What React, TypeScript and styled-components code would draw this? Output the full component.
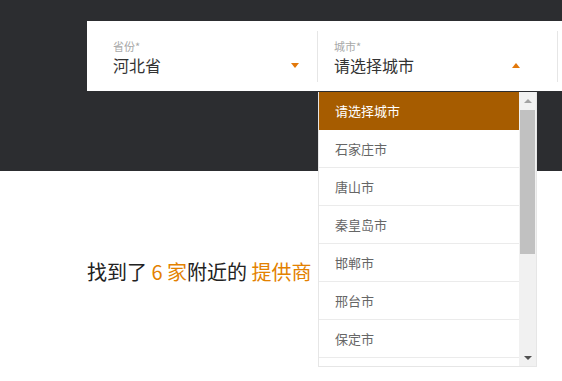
import React from "react";
import styled, { createGlobalStyle } from "styled-components";

const Global = createGlobalStyle`
  html { overflow: hidden; }
  body { margin: 0; padding: 0; background: #fff; min-height: 100vh; font-family: "Noto Sans CJK SC", "Noto Sans", sans-serif; }
  * { box-sizing: border-box; }
`;

const Header = styled.header`
  height: 171px;
  background: #2c2d30;
  padding: 21px 0 0 87px;
`;

const Card = styled.div`
  display: flex;
  height: 70px;
  width: 520px;
  background: #fff;
  padding: 10px 0 9px;
`;

const Field = styled.div<{ $w: number; $pl: number; $pr: number }>`
  position: relative;
  flex: 0 0 ${(p) => p.$w}px;
  padding: 7px ${(p) => p.$pr}px 0 ${(p) => p.$pl}px;
  border-right: 1px solid #e6e6e6;
`;

const Label = styled.div`
  font-size: 11px;
  line-height: 16px;
  color: #a8a8a8;
`;

const ValueRow = styled.div`
  display: flex;
  align-items: center;
  justify-content: space-between;
  font-size: 16px;
  line-height: 22px;
  color: #333;
`;

const Caret = styled.span<{ $up?: boolean }>`
  width: 0;
  height: 0;
  margin-top: 1px;
  border-left: 4px solid transparent;
  border-right: 4px solid transparent;
  ${(p) =>
    p.$up
      ? "border-bottom: 5px solid #e2780a;"
      : "border-top: 5px solid #e2780a;"}
`;

const Dropdown = styled.div`
  position: absolute;
  top: calc(100% + 10px);
  left: 0;
  width: 219px;
  height: 275px;
  display: flex;
  background: #fff;
  border: 1px solid #e6e6e6;
  border-top: none;
  z-index: 5;
`;

const List = styled.ul`
  flex: 1;
  margin: 0;
  padding: 0;
  list-style: none;
  overflow: hidden;
`;

const Item = styled.li<{ $active?: boolean }>`
  height: 38px;
  display: flex;
  align-items: center;
  padding-left: 16px;
  font-size: 13px;
  color: ${(p) => (p.$active ? "#fff" : "#666")};
  background: ${(p) => (p.$active ? "#a65c00" : "#fff")};
  border-bottom: 1px solid ${(p) => (p.$active ? "#a65c00" : "#ebebeb")};
`;

const ScrollBar = styled.div`
  flex: 0 0 17px;
  background: #f1f1f1;
  display: flex;
  flex-direction: column;
  align-items: center;
`;

const ScrollBtn = styled.div`
  height: 17px;
  width: 17px;
  display: flex;
  align-items: center;
  justify-content: center;
`;

const Arrow = styled.span<{ $down?: boolean }>`
  width: 0;
  height: 0;
  border-left: 4px solid transparent;
  border-right: 4px solid transparent;
  ${(p) =>
    p.$down
      ? "border-top: 4px solid #505050;"
      : "border-bottom: 4px solid #a3a3a3;"}
`;

const Thumb = styled.div`
  width: 15px;
  height: 144px;
  margin-top: 1px;
  background: #c1c1c1;
`;

const Spacer = styled.div`
  flex: 1;
`;

const Results = styled.section`
  padding: 87px 0 0 87px;
  font-size: 20px;
  line-height: 28px;
  color: #222;
`;

const Hi = styled.span`
  color: #e38100;
`;

const cities = [
  "请选择城市",
  "石家庄市",
  "唐山市",
  "秦皇岛市",
  "邯郸市",
  "邢台市",
  "保定市",
  "张家口市",
];

export default function App() {
  return (
    <>
      <Global />
      <Header>
        <Card>
          <Field $w={231} $pl={26} $pr={18}>
            <Label>省份*</Label>
            <ValueRow>
              <span>河北省</span>
              <Caret />
            </ValueRow>
          </Field>
          <Field $w={240} $pl={16} $pr={37}>
            <Label>城市*</Label>
            <ValueRow>
              <span>请选择城市</span>
              <Caret $up />
            </ValueRow>
            <Dropdown>
              <List>
                {cities.map((c, i) => (
                  <Item key={c} $active={i === 0}>
                    {c}
                  </Item>
                ))}
              </List>
              <ScrollBar>
                <ScrollBtn>
                  <Arrow />
                </ScrollBtn>
                <Thumb />
                <Spacer />
                <ScrollBtn>
                  <Arrow $down />
                </ScrollBtn>
              </ScrollBar>
            </Dropdown>
          </Field>
          <Field $w={60} $pl={16} $pr={16} />
        </Card>
      </Header>
      <Results>
        找到了 <Hi>6 家</Hi>附近的 <Hi>提供商</Hi>
      </Results>
    </>
  );
}
